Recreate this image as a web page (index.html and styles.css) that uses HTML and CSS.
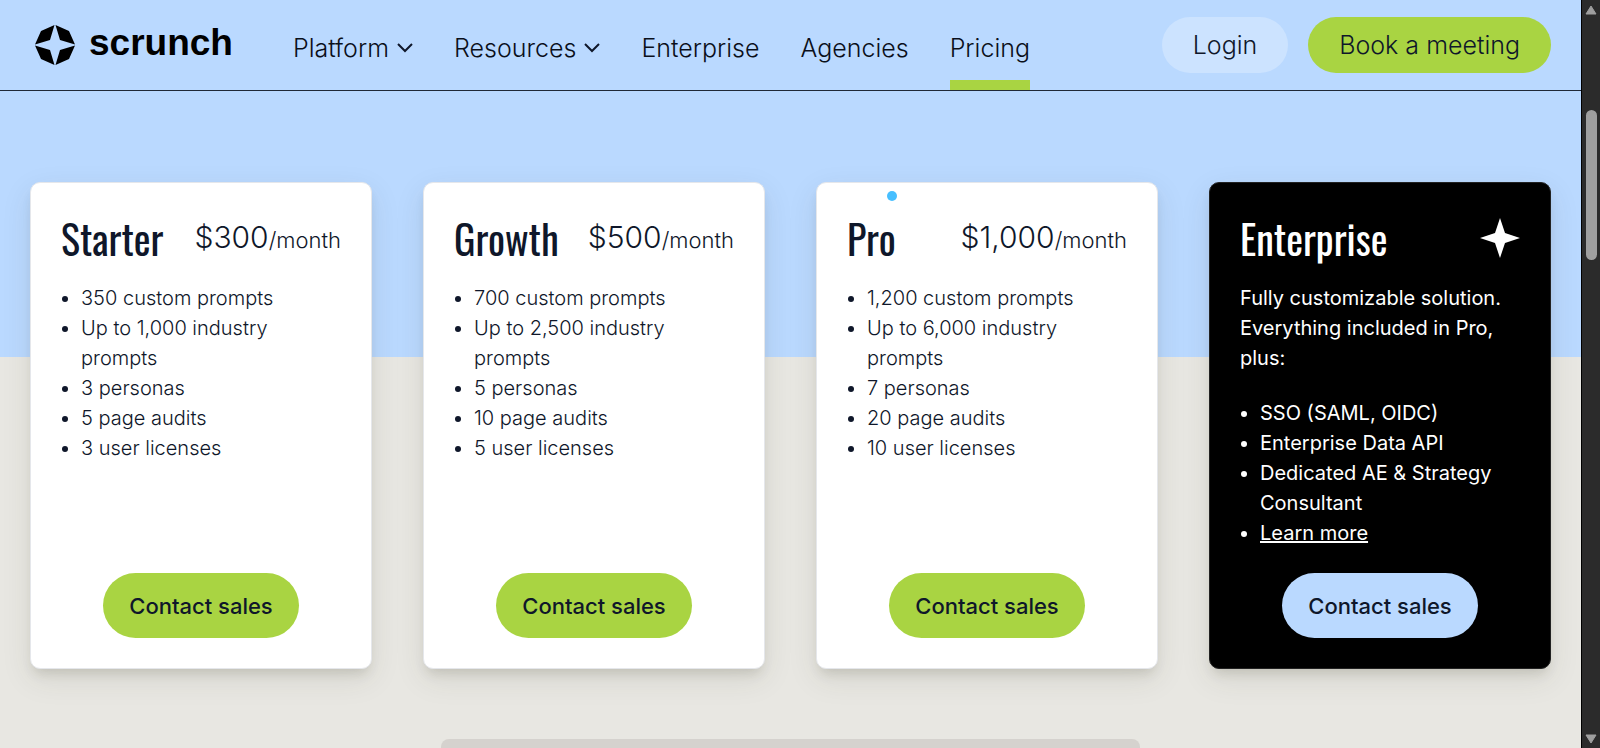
FILE: index.html
```html
<!DOCTYPE html>
<html lang="en">
<head>
  <meta charset="UTF-8">
  <meta name="viewport" content="width=device-width, initial-scale=1.0">
  <title>Pricing - Scrunch</title>
  <link rel="stylesheet" href="styles.css">
</head>
<body>
  <div class="page">
    <!-- Header -->
    <header class="header">
      <a href="#" class="logo">
        <svg class="logo-icon" viewBox="0 0 40 40" aria-hidden="true">
          <path d="M19.5 0L6 6L0 19.5L15 15ZM20.5 0L34 6L40 19.5L25 15ZM0 20.5L6 34L19.5 40L15 25ZM40 20.5L34 34L20.5 40L25 25Z"/>
        </svg>
        <span>scrunch</span>
      </a>
      <nav class="nav">
        <a href="#">Platform
          <svg class="chevron" viewBox="0 0 16 16" aria-hidden="true"><path d="M1 4L8 11L15 4"/></svg>
        </a>
        <a href="#">Resources
          <svg class="chevron" viewBox="0 0 16 16" aria-hidden="true"><path d="M1 4L8 11L15 4"/></svg>
        </a>
        <a href="#">Enterprise</a>
        <a href="#">Agencies</a>
        <a href="#" class="active">Pricing</a>
      </nav>
      <div class="actions">
        <button class="btn btn-login">Login</button>
        <button class="btn btn-meeting">Book a meeting</button>
      </div>
    </header>

    <!-- Pricing cards -->
    <main class="pricing">
      <div class="cards">
        <section class="card">
          <div class="card-head">
            <h2>Starter</h2>
            <p class="price">$300<span>/month</span></p>
          </div>
          <ul>
            <li>350 custom prompts</li>
            <li>Up to 1,000 industry prompts</li>
            <li>3 personas</li>
            <li>5 page audits</li>
            <li>3 user licenses</li>
          </ul>
          <button class="btn btn-sales">Contact sales</button>
        </section>

        <section class="card">
          <div class="card-head">
            <h2>Growth</h2>
            <p class="price">$500<span>/month</span></p>
          </div>
          <ul>
            <li>700 custom prompts</li>
            <li>Up to 2,500 industry prompts</li>
            <li>5 personas</li>
            <li>10 page audits</li>
            <li>5 user licenses</li>
          </ul>
          <button class="btn btn-sales">Contact sales</button>
        </section>

        <section class="card">
          <span class="dot"></span>
          <div class="card-head">
            <h2>Pro</h2>
            <p class="price">$1,000<span>/month</span></p>
          </div>
          <ul>
            <li>1,200 custom prompts</li>
            <li>Up to 6,000 industry prompts</li>
            <li>7 personas</li>
            <li>20 page audits</li>
            <li>10 user licenses</li>
          </ul>
          <button class="btn btn-sales">Contact sales</button>
        </section>

        <section class="card card-dark">
          <div class="card-head">
            <h2>Enterprise</h2>
            <svg class="star" viewBox="0 0 40 40" aria-hidden="true">
              <path d="M20 0L25 15L40 20L25 25L20 40L15 25L0 20L15 15Z"/>
            </svg>
          </div>
          <p class="intro">Fully customizable solution. Everything included in Pro, plus:</p>
          <ul>
            <li>SSO (SAML, OIDC)</li>
            <li>Enterprise Data API</li>
            <li>Dedicated AE &amp; Strategy Consultant</li>
            <li><a href="#">Learn more</a></li>
          </ul>
          <button class="btn btn-sales">Contact sales</button>
        </section>
      </div>
      <div class="panel"></div>
    </main>
  </div>

  <!-- Scrollbar -->
  <div class="scrollbar" aria-hidden="true">
    <svg class="arrow" viewBox="0 0 12 10"><path d="M6 1L11 9H1Z"/></svg>
    <div class="track"><div class="thumb"></div></div>
    <svg class="arrow" viewBox="0 0 12 10"><path d="M1 1H11L6 9Z"/></svg>
  </div>
</body>
</html>
```

FILE: styles.css
```css
* {
  box-sizing: border-box;
}

body {
  margin: 0;
  display: flex;
  height: 100vh;
  overflow: hidden;
  font-family: Inter, "Liberation Sans", sans-serif;
  font-weight: 300;
  color: #0f172a;
  background: #e8e7e2;
}

h2,
p,
ul {
  margin: 0;
  padding: 0;
}

.page {
  flex: 1;
  min-width: 0;
}

/* header */
.header {
  display: flex;
  align-items: center;
  padding: 0 30px 0 35px;
  background: #bad9ff;
  border-bottom: 1px solid #1f2937;
}

.logo {
  display: flex;
  align-items: center;
  gap: 14px;
  margin-right: 60px;
  color: #000;
  font-family: "Liberation Sans", Arial, sans-serif;
  font-size: 37px;
  font-weight: bold;
  line-height: 40px;
  text-decoration: none;
}

.logo span {
  padding-bottom: 4px;
}

.logo-icon {
  width: 40px;
  height: 40px;
}

.nav {
  display: flex;
  gap: 41px;
}

.nav a {
  display: flex;
  align-items: center;
  gap: 8px;
  height: 90px;
  padding-top: 16px;
  border-bottom: 10px solid transparent;
  color: #0a0f1a;
  font-size: 25px;
  text-decoration: none;
}

.nav a.active {
  border-bottom-color: #a9d442;
}

.chevron {
  width: 16px;
  height: 16px;
  fill: none;
  stroke: #0f172a;
  stroke-width: 2;
}

.actions {
  display: flex;
  gap: 20px;
  margin-left: auto;
}

.btn {
  border: none;
  border-radius: 40px;
  color: #0f172a;
  font-family: inherit;
  font-weight: 300;
  white-space: nowrap;
  cursor: pointer;
}

.btn-login,
.btn-meeting {
  height: 56px;
  padding: 0 31px;
  font-size: 25px;
}

.btn-login {
  background: #cce3ff;
}

.btn-meeting,
.btn-sales {
  background: #a9d442;
}

/* pricing */
.pricing {
  padding: 91px 30px 0;
  background: linear-gradient(#bad9ff 266px, #e8e7e2 266px);
}

.cards {
  display: grid;
  grid-template-columns: repeat(4, 1fr);
  gap: 51px;
}

.card {
  position: relative;
  display: flex;
  flex-direction: column;
  padding: 30px;
  background: #fff;
  border: 1px solid #e5e7eb;
  border-radius: 10px;
  box-shadow: 0 10px 30px rgba(60, 60, 40, 0.1), 0 8px 12px -4px rgba(60, 60, 40, 0.16);
}

.card-head {
  display: flex;
  align-items: center;
  justify-content: space-between;
  height: 50px;
  margin-bottom: 20px;
}

.card h2 {
  font-family: Oswald, "Liberation Sans Narrow", "Roboto Condensed", sans-serif;
  font-size: 40px;
  font-weight: 400;
  line-height: 50px;
}

.price {
  font-size: 30px;
  line-height: 50px;
}

.price span {
  font-size: 22px;
}

.card ul {
  padding-left: 20px;
}

.card li,
.intro {
  font-size: 20px;
  line-height: 30px;
}

.btn-sales {
  align-self: center;
  height: 65px;
  margin-top: auto;
  padding: 0 26px;
  font-size: 22px;
  font-weight: 500;
}

.card-dark {
  background: #000;
  border-color: #222;
  color: #fff;
  font-weight: 400;
}

.card-dark ul {
  margin: 25px 0 25px;
}

.card-dark a {
  color: #fff;
}

.card-dark .btn-sales {
  background: #bad9ff;
}

.star {
  width: 40px;
  height: 40px;
  fill: #fff;
}

.dot {
  position: absolute;
  top: 8px;
  left: 70px;
  width: 10px;
  height: 10px;
  border-radius: 50%;
  background: #47bfff;
}

.panel {
  width: 46%;
  height: 80px;
  margin: 70px auto 0;
  background: #d5d2ce;
  border-radius: 8px;
}

/* scrollbar */
.scrollbar {
  display: flex;
  flex-direction: column;
  align-items: center;
  width: 19px;
  padding: 5px 0 4px;
  background: #2b2b2b;
  border-left: 1px solid #000;
}

.arrow {
  width: 12px;
  height: 10px;
  fill: #9f9f9f;
  stroke: #9f9f9f;
  stroke-linejoin: round;
}

.track {
  flex: 1;
  padding-top: 95px;
}

.thumb {
  width: 11px;
  height: 150px;
  border-radius: 6px;
  background: #9f9f9f;
}
```
